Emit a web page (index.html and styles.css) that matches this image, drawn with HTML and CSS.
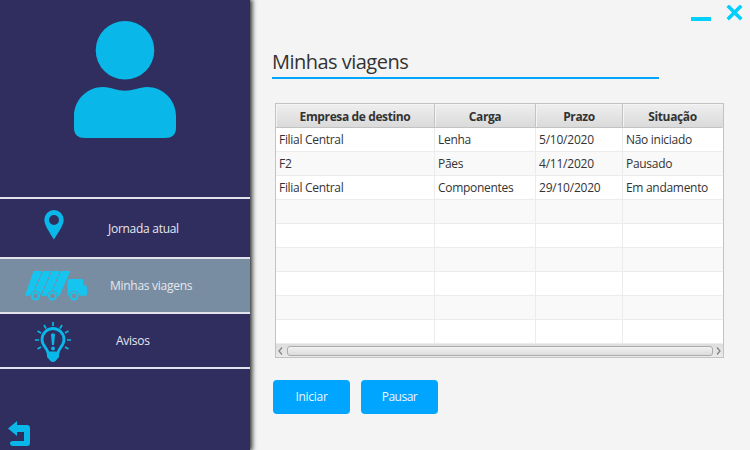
FILE: index.html
```html
<!DOCTYPE html>
<html lang="pt-BR">
<head>
<meta charset="utf-8">
<title>Minhas viagens</title>
<link rel="stylesheet" href="styles.css">
</head>
<body>
<div class="app">
  <aside class="sidebar">
    <svg class="avatar" width="102" height="118" viewBox="0 0 102 118"><circle cx="51" cy="29.3" r="29.3"/><path d="M29 66C34 66 37 67 40 68Q51 71.500 62 68C66 67 69 66 73 66C89 66 102 79 102 95V107Q102 117 91 117H11Q0 117 0 107V95C0 79 13 66 29 66Z"/></svg>
    <nav class="menu">
      <a class="item item-journey">
        <svg width="20" height="30" viewBox="0 0 20 30"><path fill-rule="evenodd" d="M10 0A9.800 9.800 0 0 0 .3 10C.3 15 6 23 9.900 29.500C14 23 19.700 15 19.700 10A9.800 9.800 0 0 0 10 0ZM10 5A5 5 0 1 1 10 15A5 5 0 0 1 10 5Z"/></svg>
        <span>Jornada atual</span>
      </a>
      <a class="item item-trips">
        <svg width="63" height="30" viewBox="0 0 63 30"><path d="M8.500 0H45.300L34.500 24.800H0ZM42.700 9.500Q42.700 8 44.200 8H57Q58 8 58 9V13.500Q62 14.500 62 17V23Q62 24.800 60 24.800H42.700Z"/><path class="gap" d="M17.800 -.5L6.800 25M26.800 -.5L15.800 25M35.800 -.5L24.800 25"/><g class="arch"><circle cx="10.500" cy="25" r="5.300"/><circle cx="27.500" cy="25" r="5.300"/><circle cx="49" cy="25" r="5.300"/></g><g class="wheel"><circle cx="10.500" cy="25" r="3.500"/><circle cx="27.500" cy="25" r="3.500"/><circle cx="49" cy="25" r="3.500"/></g></svg>
        <span>Minhas viagens</span>
      </a>
      <a class="item item-notices">
        <svg width="36" height="41" viewBox="0 0 36 41"><path class="bulb" d="M13 31C12.500 26 7 24 7 17.500A11 11 0 0 1 29 17.500C29 24 23.500 26 23 31Z"/><path d="M12 30H24V35L20.500 39Q18 41 15.500 39L12 35ZM16 12.500Q18 10 20 12.500L19 23H17Z"/><circle cx="18" cy="26.500" r="1.900"/><path class="rays" d="M18 0V4M9 3L11 6.500M27 3L25 6.500M2.500 9L6 11M33.500 9L30 11M0 18H4M32 18H36M2.500 27L6 25M33.500 27L30 25"/></svg>
        <span>Avisos</span>
      </a>
    </nav>
    <svg class="back" width="22" height="25" viewBox="0 0 22 25"><path d="M0 7.500L9 0V4H19Q22 4 22 7V22Q22 25 19 25H5Q2 25 2 22Q2 20 5 20H16V11H9V15Z"/></svg>
  </aside>
  <main class="content">
    <div class="window-controls">
      <svg width="54" height="17" viewBox="0 0 54 17"><path d="M0 12H20V16H0Z"/><path class="close" d="M38 2L49 13M49 2L38 13"/></svg>
    </div>
    <h1><span>Minhas viagens</span></h1>
    <div class="table-frame">
      <table>
        <colgroup><col class="c1"><col class="c2"><col class="c3"><col class="c4"></colgroup>
        <thead><tr><th>Empresa de destino</th><th>Carga</th><th>Prazo</th><th>Situação</th></tr></thead>
        <tbody>
          <tr><td>Filial Central</td><td>Lenha</td><td class="date">5/10/2020</td><td>Não iniciado</td></tr>
          <tr><td>F2</td><td>Pães</td><td class="date">4/11/2020</td><td>Pausado</td></tr>
          <tr><td>Filial Central</td><td>Componentes</td><td class="date">29/10/2020</td><td>Em andamento</td></tr>
          <tr><td></td><td></td><td></td><td></td></tr>
          <tr><td></td><td></td><td></td><td></td></tr>
          <tr><td></td><td></td><td></td><td></td></tr>
          <tr><td></td><td></td><td></td><td></td></tr>
          <tr><td></td><td></td><td></td><td></td></tr>
          <tr><td></td><td></td><td></td><td></td></tr>
        </tbody>
      </table>
      <div class="scrollbar">
        <svg width="5" height="8" viewBox="0 0 5 8"><path d="M4 .5L1 4L4 7.500"/></svg>
        <div class="thumb"></div>
        <svg width="5" height="8" viewBox="0 0 5 8"><path d="M1 .5L4 4L1 7.500"/></svg>
      </div>
    </div>
    <div class="actions"><button class="start">Iniciar</button><button class="pause">Pausar</button></div>
  </main>
</div>
</body>
</html>
```
FILE: styles.css
```css
* { box-sizing: border-box; }
body { margin: 0; font: 12px/16px "Open Sans", "Noto Sans", sans-serif; color: #333; overflow: hidden; }
.app { display: flex; width: 750px; height: 450px; background: #f4f4f4; }
.sidebar { display: flex; flex-direction: column; width: 250px; height: 450px; background: #2f2e5f; box-shadow: 1px 0 5px 1px #222; fill: #09b8e8; }
.avatar { margin: 21px 0 0 74px; flex: none; }
.menu { margin-top: 58px; border-top: 2px solid #e3e3ed; }
.item { display: flex; align-items: center; border-bottom: 2px solid #e3e3ed; color: #e7e7ef; letter-spacing: -.28px; }
.item svg { flex: none; }
.item-journey { height: 60px; padding: 2px 0 0 44px; }
.item-journey svg { margin: -8px 44px 0 0; }
.item-trips { height: 55px; padding-left: 25px; background: #788da1; fill: #16c5ef; }
.item-trips svg { margin: 0 22px 0 0; }
.item-trips span { padding-top: 1px; }
.gap { fill: none; stroke: #788da1; stroke-width: 1; stroke-dasharray: 6 1; }
.arch { fill: #788da1; }
.wheel { fill: #788da1; stroke: #16c5ef; stroke-width: 2; }
.item-notices { height: 55px; padding-left: 35px; }
.item-notices svg { margin: 4px 45px 0 0; }
.bulb, .rays { fill: none; stroke: #09b8e8; stroke-width: 2.8; }
.rays { stroke-width: 1.7; }
.back { margin: auto 0 4px 8px; }
.content { flex: 1; padding: 5px 0 0 22px; }
.window-controls { height: 17px; padding-left: 419px; }
.window-controls svg { display: block; fill: #00d0ff; }
.close { stroke: #00d0ff; stroke-width: 3.6; stroke-linecap: square; }
h1 { width: 387px; height: 33px; margin: 24px 0 0; border-bottom: 2px solid #00a5ff; font-size: 20px; line-height: 32px; font-weight: 400; letter-spacing: -.52px; }
.table-frame { width: 449px; height: 255px; margin: 24px 0 0 3px; border: 1px solid #c3c3c3; background: #fff; }
table { width: 447px; table-layout: fixed; border-collapse: separate; border-spacing: 0; }
.c1 { width: 159px; } .c2 { width: 101px; } .c3 { width: 87px; } .c4 { width: 100px; }
th, td { height: 24px; padding: 0 3px; border-right: 1px solid #ececec; border-bottom: 1px solid #ececec; line-height: 16px; white-space: nowrap; letter-spacing: -.3px; }
th { padding-top: 2px; border-color: #c3c3c3; background: linear-gradient(#efefef, #dadada); font-weight: 700; box-shadow: inset 1px 1px #f4f4f4; letter-spacing: -.38px; }
.date { letter-spacing: -.22px; }
tbody tr:nth-child(even) { background: #f9f9f9; }
th:last-child, td:last-child { border-right-color: transparent; }
.scrollbar { display: flex; align-items: center; justify-content: space-between; width: 447px; height: 13px; padding: 0 2px; background: linear-gradient(#dedede, #eaeaea); fill: none; stroke: #858585; stroke-width: 1.3; }
.thumb { width: 426px; height: 10px; border: 1px solid #ababab; border-radius: 3px; background: linear-gradient(#f2f2f2, #dcdcdc); }
.actions { display: flex; align-items: flex-start; gap: 11px; padding: 22px 0 0 1px; }
button { width: 77px; height: 34px; margin: 0; padding: 0; border: 0; border-radius: 4px; background: #00a5ff; color: #e8f6ff; font: inherit; }
.start { letter-spacing: -.3px; }
.pause { letter-spacing: -.5px; }
```
